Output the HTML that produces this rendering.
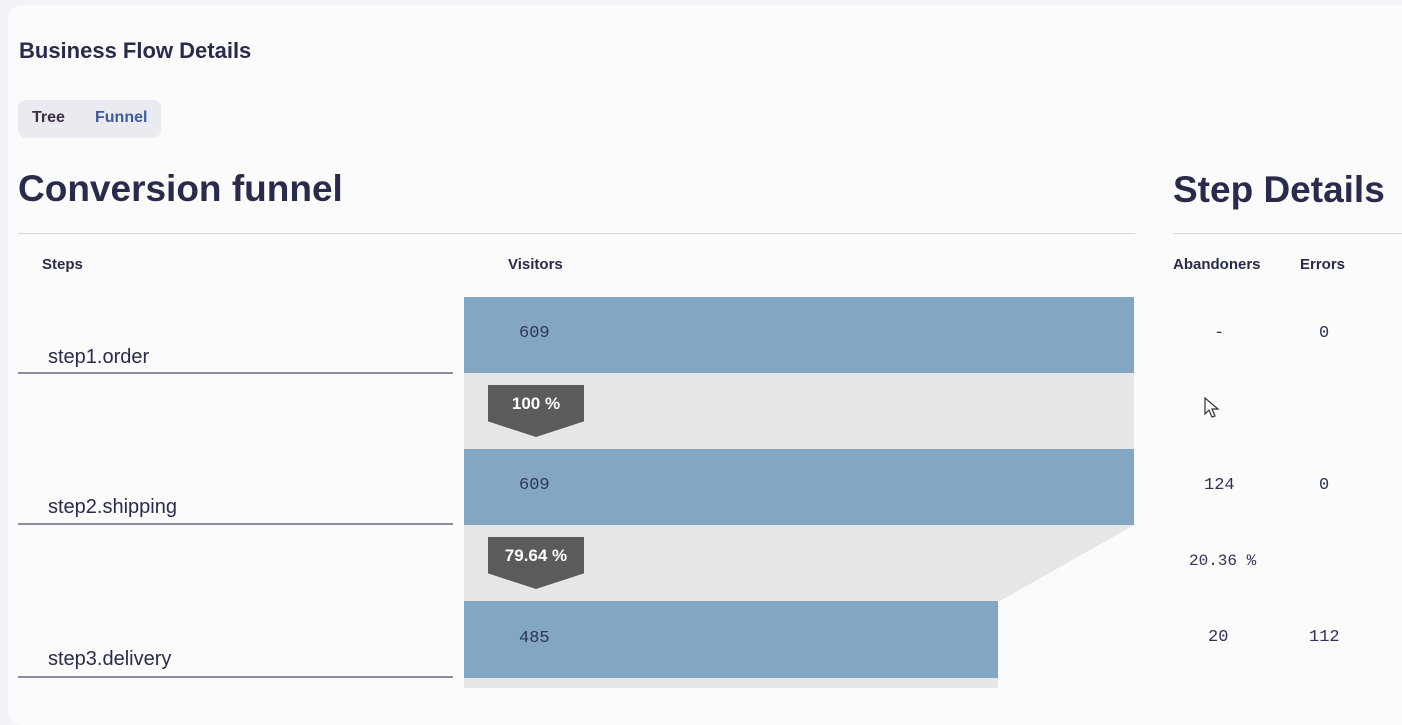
<!DOCTYPE html>
<html><head><style>
*{margin:0;padding:0;box-sizing:border-box}
body{width:1402px;height:688px;overflow:hidden;background:#f2f3f6;font-family:"Liberation Sans",sans-serif;color:#282c4a;position:relative}
.card{position:absolute;left:8px;top:5px;width:1420px;height:720px;background:#fbfbfc;border-radius:14px}
.a{position:absolute;white-space:nowrap}
.b{font-weight:bold}
.mono{font-family:"Liberation Mono",monospace;font-size:17px;color:#2f3358}
.bar{position:absolute;background:#83a7c3}
.gray{position:absolute;background:#e6e6e6}
.line{position:absolute;left:18px;width:435px;height:2px;background:#8f8d9c}
.step{position:absolute;left:48px;font-size:20px;color:#282c4a}
.badge{position:absolute;left:488px;width:96px;height:52px;background:#5b5b5b;clip-path:polygon(0 0,100% 0,100% 70%,50% 100%,0 70%);color:#fff;font-size:17px;font-weight:bold;text-align:center;line-height:38px}
</style></head><body>
<div class="card"></div>
<div class="a b" style="left:19px;top:38px;font-size:22px">Business Flow Details</div>
<div class="a" style="left:18px;top:100px;width:143px;height:38px;background:#e9ebf0;border-radius:8px"></div>
<div class="a b" style="left:32px;top:109px;font-size:16px;color:#3a2d44">Tree</div>
<div class="a b" style="left:95px;top:109px;font-size:16px;color:#3d5c99">Funnel</div>
<div class="a b" style="left:18px;top:168px;font-size:37px">Conversion funnel</div>
<div class="a b" style="left:1173px;top:169px;font-size:37px">Step Details</div>
<div class="a" style="left:18px;top:233px;width:1117px;height:1px;background:#d6d6e0"></div>
<div class="a" style="left:1173px;top:233px;width:229px;height:1px;background:#d6d6e0"></div>
<div class="a b" style="left:42px;top:256px;font-size:15px">Steps</div>
<div class="a b" style="left:508px;top:256px;font-size:15px">Visitors</div>
<div class="a b" style="left:1173px;top:256px;font-size:15px">Abandoners</div>
<div class="a b" style="left:1300px;top:256px;font-size:15px">Errors</div>

<div class="bar" style="left:464px;top:297px;width:670px;height:76px"></div>
<div class="gray" style="left:464px;top:373px;width:670px;height:76px"></div>
<div class="bar" style="left:464px;top:449px;width:670px;height:76px"></div>
<div class="gray" style="left:464px;top:525px;width:670px;height:76px;clip-path:polygon(0 0,100% 0,80% 100%,0 100%)"></div>
<div class="bar" style="left:464px;top:601px;width:534px;height:77px"></div>
<div class="gray" style="left:464px;top:678px;width:534px;height:10px"></div>

<div class="a mono" style="left:519px;top:324px">609</div>
<div class="a mono" style="left:519px;top:476px">609</div>
<div class="a mono" style="left:519px;top:629px">485</div>
<div class="badge" style="top:385px">100 %</div>
<div class="badge" style="top:537px">79.64 %</div>

<div class="step" style="top:346px">step1.order</div>
<div class="line" style="top:372px"></div>
<div class="step" style="top:496px">step2.shipping</div>
<div class="line" style="top:523px"></div>
<div class="step" style="top:648px">step3.delivery</div>
<div class="line" style="top:676px"></div>

<div class="a mono" style="left:1214px;top:324px">-</div>
<div class="a mono" style="left:1319px;top:324px">0</div>
<div class="a mono" style="left:1204px;top:476px">124</div>
<div class="a mono" style="left:1319px;top:476px">0</div>
<div class="a mono" style="left:1189px;top:552px;font-size:16px">20.36 %</div>
<div class="a mono" style="left:1208px;top:628px">20</div>
<div class="a mono" style="left:1309px;top:628px">112</div>
<svg class="a" style="left:1204px;top:397px" width="20" height="26" viewBox="0 0 20 26"><path d="M1 1 L1 17 L5 13 L8 20 L11 19 L8 12 L14 12 Z" fill="#fff" stroke="#333" stroke-width="1.2"/></svg>
</body></html>
